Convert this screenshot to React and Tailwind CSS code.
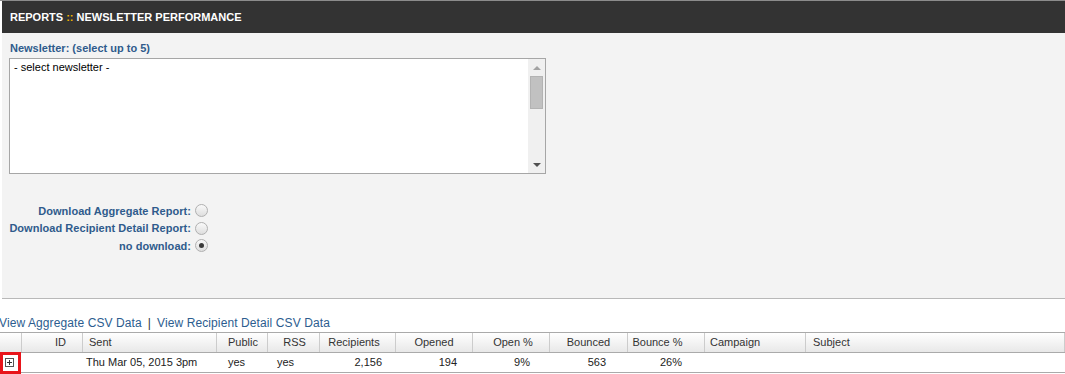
import React from "react";

const columns = "grid grid-cols-[22px_61px_134px_51px_52px_76px_77px_77px_78px_77px_101px_1fr]";

function Radio({ checked }) {

    return (

        <span className="ml-[4px] w-[13px] h-[13px] rounded-full border border-[#b0b0b0] bg-linear-to-b from-[#f9f9f9] to-[#dedede] flex items-center justify-center">

            {checked && <span className="w-[5px] h-[5px] rounded-full bg-[#3a3a3a]" />}

        </span>

    );

}

function RadioRow({ label, checked }) {

    return (

        <div className="w-[206px] h-[17.5px] flex items-center justify-end">

            <span className="font-bold text-[#2f5b8c] tracking-[0.04px]">{label}</span>

            <Radio checked={checked} />

        </div>

    );

}

function ExpandIcon() {

    return (

        <svg width="9" height="9" viewBox="0 0 9 9">
            <rect x="0.5" y="0.5" width="8" height="8" fill="#fff" stroke="#555" />
            <path d="M2 4.5h5M4.5 2v5" stroke="#333" />
        </svg>

    );

}

export default function App() {

    const heads = [
        { t: "", c: "" },
        { t: "ID", c: "justify-end pr-[16px]" },
        { t: "Sent", c: "justify-start pl-[6px]" },
        { t: "Public", c: "justify-center pl-[2px]" },
        { t: "RSS", c: "justify-center pl-[2px]" },
        { t: "Recipients", c: "justify-center pr-[7px]" },
        { t: "Opened", c: "justify-center" },
        { t: "Open %", c: "justify-center pl-[4px]" },
        { t: "Bounced", c: "justify-center" },
        { t: "Bounce %", c: "justify-center pr-[17px]" },
        { t: "Campaign", c: "justify-start pl-[5px]" },
        { t: "Subject", c: "justify-start pl-[7px]" }
    ];

    return (

        <div className="w-[1065px] h-[374px] overflow-hidden bg-white text-[11px] text-[#222] font-['Liberation_Sans',Arial,sans-serif]">

            <div className="h-px bg-[#8c8c8c]" />

            <div className="ml-[2px] h-[32px] bg-[#333333] flex items-center pl-[8px] font-bold text-white">

                REPORTS<span className="text-[#f0b400] mx-[3px]">::</span>NEWSLETTER PERFORMANCE

            </div>

            <div className="ml-[2px] h-[266px] bg-[#f3f3f3] border-b border-[#b8b8b8] pt-[8px]">

                <div className="pl-[8px] leading-[14px] font-bold text-[#2f5b8c]">

                    Newsletter: (select up to 5)

                </div>

                <div className="mt-[3px] ml-[7px] w-[537px] h-[116px] border border-[#a6a6a6] bg-white flex">

                    <div className="flex-1 pl-[4px] pt-[1px] leading-[14px] text-black">

                        - select newsletter -

                    </div>

                    <div className="w-[17px] bg-[#f0f0f0] flex flex-col">

                        <div className="h-[17px] flex items-center justify-center">
                            <span className="w-0 h-0 border-l-[4px] border-r-[4px] border-b-[4px] border-l-transparent border-r-transparent border-b-[#a3a3a3]" />
                        </div>

                        <div className="mx-[2px] h-[33px] bg-[#c1c1c1] border border-[#b3b3b3]" />

                        <div className="flex-1" />

                        <div className="h-[17px] flex items-center justify-center">
                            <span className="w-0 h-0 border-l-[4px] border-r-[4px] border-t-[4px] border-l-transparent border-r-transparent border-t-[#505050]" />
                        </div>

                    </div>

                </div>

                <div className="mt-[28px]">

                    <RadioRow label="Download Aggregate Report:" />

                    <RadioRow label="Download Recipient Detail Report:" />

                    <RadioRow label="no download:" checked />

                </div>

            </div>

            <div className="mt-[16px] h-[17px] -ml-[1px] text-[12px] leading-[16px] tracking-[0.1px] text-[#2c5d8f] whitespace-nowrap">

                View Aggregate CSV Data<span className="text-[#333] mx-[6px]">|</span>View Recipient Detail CSV Data

            </div>

            <div className={`${columns} h-[21px] border-t border-b border-[#aaaaaa] text-[#333]`}>

                {heads.map((h, i) => (

                    <div
                        key={i}
                        className={`flex items-center border-r border-[#cccccc] bg-linear-to-b from-white to-[#e8e8e8] ${h.c}`}
                    >

                        {h.t}

                    </div>

                ))}

            </div>

            <div className={`${columns} h-[20px] border-b border-[#aaaaaa] items-center`}>

                <div className="relative h-full flex items-center pl-[5px]">

                    <ExpandIcon />

                    <div className="absolute left-0 -top-[1px] w-[21px] h-[22px] border-[3px] border-[#e8141a]" />

                </div>

                <div />

                <div className="pl-[3px] whitespace-nowrap">Thu Mar 05, 2015 3pm</div>

                <div className="pl-[11px]">yes</div>

                <div className="pl-[9px]">yes</div>

                <div className="text-right pr-[14px]">2,156</div>

                <div className="text-right pr-[16px]">194</div>

                <div className="text-right pr-[20px]">9%</div>

                <div className="text-right pr-[22px]">563</div>

                <div className="text-right pr-[23px]">26%</div>

                <div />

                <div />

            </div>

        </div>

    );

}
